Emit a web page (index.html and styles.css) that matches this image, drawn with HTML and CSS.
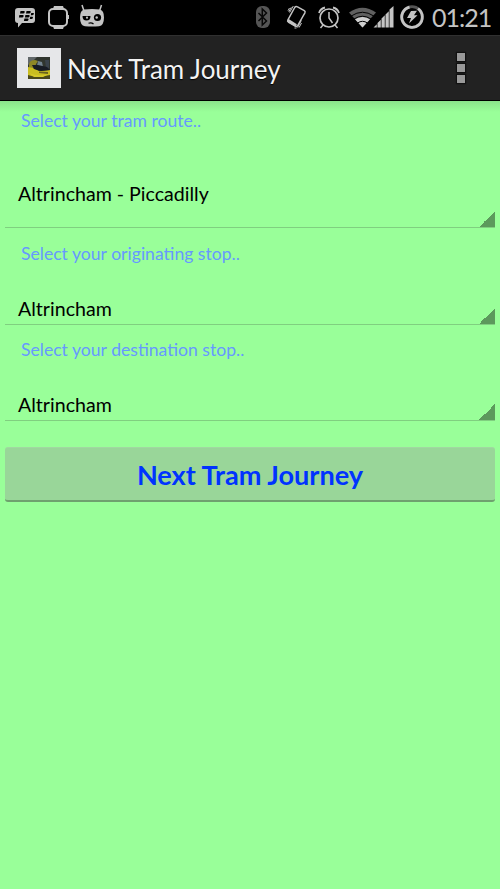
FILE: index.html
```html
<!DOCTYPE html>
<html lang="en">
<head>
<meta charset="utf-8">
<title>Next Tram Journey</title>
<link rel="stylesheet" href="styles.css">
</head>
<body>
<header class="status">
  <svg class="notifications" width="125" height="35" viewBox="0 0 125 35" fill="#c4c4c4">
    <path d="M18 8h14q3 0 3 3v9q0 3-3 3H22l-4 4.500v-4.500q-3 0-3-3v-9q0-3 3-3z"/>
    <path fill="#000" d="M20.500 11h3.500q1 0 .700 1.200t-1.500 1.300H20zM26.500 11H30q1 0 .700 1.200t-1.500 1.300H26zM19.400 15h3.500q1 0 .700 1.200t-1.500 1.300h-3.200zM25.400 15h3.500q1 0 .700 1.200t-1.500 1.300h-3.200zM31.200 13h2q1 0 .700 1.100t-1.500 1.200h-1.600zM24.400 18.500h3.400q1 0 .700 1.200t-1.500 1.300h-3.100zM30.200 16.800h2q1 0 .700 1.100t-1.500 1.200h-1.700z"/>
    <path d="M54 6h9l1.500 4h-12zM52.500 25h12L63 29H54zM67 15h2v4h-2z"/>
    <rect x="49" y="9" width="18" height="17" rx="4" fill="#000" stroke="#c4c4c4" stroke-width="2"/>
    <path d="M82 5l2 6M101.500 5l-2 6" stroke="#c4c4c4" stroke-width="1.500"/>
    <path d="M84 9.500q8-1 16 0 4 1 4 8 0 8-5 8.700-7 .800-14 0-5-.700-5-8.700 0-7 4-8z"/>
    <path fill="#000" d="M82.500 16h8q0 4.500-4 4.500t-4-4.500z"/>
    <circle cx="97.500" cy="17.500" r="3.600" fill="#000"/><circle cx="96.700" cy="17.500" r="1.200"/><circle cx="87" cy="17.700" r="1.100"/>
    <path d="M88.500 23.200q3-1 5 .8" fill="none" stroke="#000" stroke-width="1.200"/>
  </svg>
  <div class="system">
    <svg width="181" height="35" viewBox="245 0 181 35" fill="none" stroke="#c4c4c4" stroke-width="1.500">
      <rect x="256" y="6" width="14" height="22" rx="6" fill="#555" stroke="none"/>
      <path d="M258.500 13l8 8-4.200 4V9l4.200 4-8 8" stroke="#080808" stroke-width="1.500"/>
      <path d="M294.700 7.500q1-1.700 2.800-.700l6.800 3.900q1.300.800.600 2.200l-7.200 12.600q-.800 1.400-2.400.5l-7-4q-1.200-.800-.4-2.200z"/>
      <path d="M287.900 20.300l8.200 5.200" stroke-width="3"/>
      <path d="M293.300 6l-3.700 6.500M291.300 7.300l-2.500 4.500M289.500 8l-1.500 2.700M301.300 20.500l-3.700 7M301.500 23l-2.400 4.500M294.500 28h2" stroke-width="1"/>
      <circle cx="329" cy="18" r="9" stroke-width="1.700"/>
      <path d="M329 12v6l3.500 5M323 25l-2.500 3M335 25l2.500 3"/>
      <path d="M319 13q1.500-4.500 6-5.500M339 13q-1.500-4.500-6-5.500" stroke-width="1.800"/>
      <path d="M362.500 27.500L349 12.500q13.500-9.500 27 0z" fill="#606060" stroke="none"/>
      <path d="M362.500 27.500l-7.500-8.300q7.500-4.500 15 0z" fill="#d0d0d0" stroke="none"/>
      <path d="M351.200 16q11.300-7.500 22.600 0M357.500 23q5-3.400 10 0" stroke="#000" stroke-width="1"/>
      <path d="M354 19q8.500-5.500 17 0" stroke="#000" stroke-width="1"/>
      <path d="M373.500 27.500l3.300-3.300v3.300zM377.500 27.500v-4.500l3.300-3.300v7.800zM381.500 27.500v-9l3.300-3.300v12.300zM385.500 27.500v-13l3.300-3.300v16.300zM389.500 27.500v-18l4-3.500v21.500z" fill="#c4c4c4" stroke="none"/>
      <circle cx="412" cy="17" r="10.300" stroke="#555" stroke-width="2.800"/>
      <path d="M418 8.700a10.300 10.300 0 1 1-8.500-1.600" stroke-width="2.800"/>
      <path d="M411 11l6-.3-3 4.500h3.500L409 23.500l2-5.500h-4z" fill="#c4c4c4" stroke="none"/>
    </svg>
    <time class="clock">01:21</time>
  </div>
</header>
<div class="actionbar">
  <div class="logo">
    <svg width="22" height="22" viewBox="0 0 22 22">
      <rect width="22" height="22" fill="#30352e"/>
      <path d="M0 0h9L5 4 0 8z" fill="#62686a"/>
      <path d="M1 7q1-4 6-4l3 1-2 3-1 4-6 1z" fill="#8e8726"/>
      <path d="M10 4l4 1 1 5-3 2-3-3z" fill="#71828e"/>
      <path d="M17 3h4v9l-3-1z" fill="#39424b"/>
      <path d="M0 10l5 1 6 3 11-1v7l-6 2H4l-4-3z" fill="#c9bd20"/>
      <path d="M4 8l6 0 9 2 3 3-9 1-7-2z" fill="#171b24"/>
      <path d="M11 14.500l9 .5v2l-9-1z" fill="#6a621f"/>
      <path d="M0 18q8 3 22 0v4H0z" fill="#4b481b"/>
      <path d="M1 16q9 4 20 1l-6 3H6z" fill="#d6c92a"/>
    </svg>
  </div>
  <h1 class="title">Next Tram Journey</h1>
  <div class="menu"><i></i><i></i><i></i></div>
</div>
<main class="content">
  <p class="label">Select your tram route..</p>
  <div class="spinner spinner-tall">Altrincham - Piccadilly</div>
  <p class="label label-second">Select your originating stop..</p>
  <div class="spinner">Altrincham</div>
  <p class="label">Select your destination stop..</p>
  <div class="spinner">Altrincham</div>
  <button class="go">Next Tram Journey</button>
</main>
</body>
</html>
```
FILE: styles.css
```css
* { box-sizing: border-box; }
body {
  margin: 0;
  height: 889px;
  overflow: hidden;
  background: #99ff99;
  font-family: Lato, "Open Sans", sans-serif;
}
.status {
  display: flex;
  justify-content: space-between;
  height: 36px;
  background: #000;
  border-bottom: 1px solid #303030;
}
.status svg { display: block; }
.system { display: flex; padding-right: 9px; }
.clock {
  width: 60px;
  margin-left: 5px;
  padding-left: 1px;
  white-space: nowrap;
  color: #c4c4c4;
  font-size: 25px;
  letter-spacing: -1px;
  line-height: 35px;
}
.actionbar {
  display: flex;
  align-items: center;
  height: 65px;
  padding: 0 35px 0 17px;
  background: #222;
  border-bottom: 1px solid #000;
}
.logo {
  display: flex;
  align-items: center;
  justify-content: center;
  width: 44px;
  height: 40px;
  background: #e6e7e9;
}
.title {
  margin: 2px 0 0 6px;
  color: #f3f3f3;
  font-size: 26px;
  font-weight: 400;
  line-height: 32px;
  white-space: nowrap;
  text-shadow: 0 1px 1px #000;
}
.menu { display: grid; gap: 3px; margin: 0 0 0 auto; }
.menu i { width: 8px; height: 8px; background: #999; box-shadow: 0 0 1px 1px #111; }
.content {
  height: 788px;
  padding: 5px 5px 0;
  background: linear-gradient(#8be48b, #99ff99 11px);
}
.label {
  height: 30px;
  margin: 0;
  padding-left: 16px;
  color: #6699ff;
  font-size: 17.6px;
  line-height: 30px;
  white-space: nowrap;
}
.label-second { margin-top: 11px; }
.spinner {
  display: flex;
  align-items: flex-end;
  height: 56px;
  margin: 0 0 10px;
  padding: 0 0 3px 13px;
  border-bottom: 1px solid #80cf80;
  background: linear-gradient(135deg, transparent 50%, #5c995c 50%) right bottom / 17px 17px no-repeat;
  background-origin: border-box;
  color: #000;
  font-size: 19.6px;
  line-height: 24px;
}
.spinner-tall { height: 92px; padding-bottom: 21px; }
.go {
  display: block;
  width: 490px;
  height: 55px;
  margin: 26px 0 0;
  padding: 2px 0 0;
  border: 0;
  border-top: 1px solid #a1d8a1;
  border-bottom: 2px solid #6ea16e;
  border-radius: 3px;
  background: #99d699;
  color: #0033ff;
  font: 700 27.1px/50px Lato, sans-serif;
}
```
